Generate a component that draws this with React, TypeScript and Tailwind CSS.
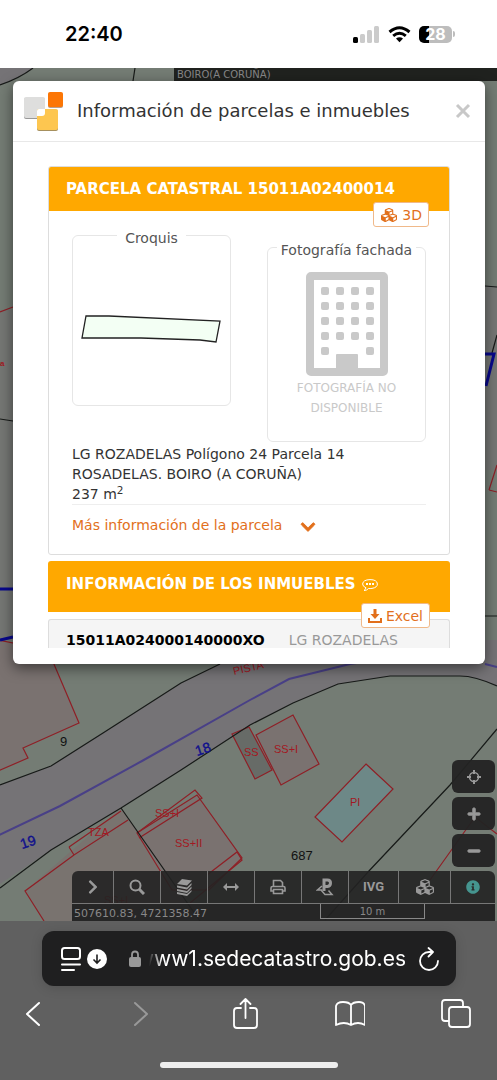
import type { ReactNode } from 'react'
import { FaChevronDown, FaChevronRight, FaCubes, FaInfoCircle, FaMinus, FaPlus } from 'react-icons/fa'

const buildings = [
  '-2,640 48,650 79,723 23,748 28,758 -2,771',
  '137,833 197,795 242,858 209,890 172,890',
  '256,735 293,715 319,764 281,785',
]

const rows = [290, 305, 320, 335, 350]
const cols = [324, 339, 354, 369]

function MapCanvas() {
  return (
    <svg className="absolute inset-0 h-full w-full" viewBox="0 0 497 853" preserveAspectRatio="xMidYMin slice" aria-hidden="true">
      <g transform="translate(0 -68)" fill="none" strokeWidth="1.2">
        <rect y="68" width="497" height="853" fill="#747c74" />
        <path d="M0 68H33Q20 78 0 85Z" fill="#757376" />
        <path d="M0 310H13V640H0ZM485 286H497V470H485Z" fill="#757774" />
        {/* road */}
        <path d="M0 785 51 766 103 733 181 683 220 664 300 640 497 640V686Q475 676 460 676L390 676 338 684 293 703 250 725 181 770 121 808 51 850 0 884Z" fill="#757376" />
        {/* ground south of the road */}
        <path d="M25 891 121 808 200 921H44Z" fill="#79736f" />
        {buildings.map(points => <polygon key={points} points={points} fill="#7a7270" stroke="#8f1f26" />)}
        <polygon points="232,734 249,727 272,770 255,779" fill="#676b67" stroke="#8f1f26" />
        <polygon points="366,764 393,789 342,842 315,817" fill="#6d8887" stroke="#8f1f26" />
        <path d="M137 833 195 790 202 798 139 838M69 847 121 811M69 847 74 855 128 820M74 855 25 891 44 921M207 875 237 852 242 860 190 903" stroke="#8f1f26" />
        <path d="M430 880 475 817 497 834M0 312 13 307M489 490 497 465M489 490 497 492" stroke="#8f1f26" />
        {/* parcel limits */}
        <path d="M0 85Q20 78 33 68M135 68 133 81M0 785 51 766 103 733 181 683 220 664M497 686Q475 676 460 676L390 676 338 684 293 703 250 725 181 770 121 808 51 850 0 888M121 808 200 921M497 729 450 785 368 872 325 920M0 419 13 421M485 286 497 287M485 616H497M492 353 497 335" stroke="#171a18" />
        <path d="M-1 835 60 806 142 761 250 700 289 679 350 664 410 655M485 664 497 667" stroke="#494087" strokeWidth="2" />
        <path d="M485 354H494L486 386M0 589H13M0 640 13 637" stroke="#08088c" strokeWidth="3" />
        <g fill="#a31822" fontFamily="Liberation Sans" fontSize="11">
          <text x="0" y="366" fontSize="8" fontWeight="700">a</text>
          <text x="234" y="675" transform="rotate(-13 234 675)">PISTA</text>
          <text x="155" y="817">SS+I</text>
          <text x="274" y="753">SS+I</text>
          <text x="244" y="756">SS</text>
          <text x="175" y="847">SS+II</text>
          <text x="88" y="836">TZA</text>
          <text x="350" y="806">PI</text>
          <text x="104" y="904">SS+I</text>
        </g>
        <g fill="#111" fontFamily="Liberation Sans" fontSize="13">
          <text x="60" y="746">9</text>
          <text x="291" y="860">687</text>
        </g>
        <g fill="#10108c" stroke="#10108c" strokeWidth="0.4" fontFamily="Liberation Sans" fontSize="14">
          <text x="197" y="756" transform="rotate(-18 197 756)">18</text>
          <text x="22" y="849" transform="rotate(-18 22 849)">19</text>
        </g>
      </g>
    </svg>
  )
}

function StatusBar() {
  return (
    <header className="flex h-[68px] items-center justify-between bg-white pl-[65px] pr-[42px] font-[Inter]">
      <span className="text-xl font-semibold text-black">22:40</span>
      <div className="flex items-center gap-2">
        <svg className="h-[17px] w-[27px]" viewBox="0 0 27 17" fill="#cbcbcb">
          <rect x="0" y="11" width="5" height="6" rx="1.5" fill="#000" />
          <rect x="7" y="8" width="5" height="9" rx="1.5" />
          <rect x="14" y="4" width="5" height="13" rx="1.5" />
          <rect x="21" y="0" width="5" height="17" rx="1.5" />
        </svg>
        <svg className="h-[17px] w-[23px]" viewBox="0 0 23 17" fill="none" stroke="#000" strokeWidth="3">
          <path d="M1.5 6Q11.500 -2.500 21.500 6M5.200 9.800Q11.500 4.600 17.800 9.800" />
          <path d="M8 12.500Q11.500 9.800 15 12.500L11.500 16.200Z" fill="#000" stroke="none" />
        </svg>
        <div className="flex items-center">
          <span className="flex h-[17px] w-[33px] items-center justify-center rounded-[5px] bg-linear-to-r from-black from-30% to-[#bdbdbd] to-30% text-base font-bold text-white">28</span>
          <span className="ml-px h-[6px] w-[2px] rounded-r-full bg-[#bdbdbd]" />
        </div>
      </div>
    </header>
  )
}

function CatastroLogo() {
  return (
    <svg className="h-10 w-10 shrink-0" viewBox="0 0 40 40" aria-hidden="true">
      <rect x="1" y="7" width="21" height="21" rx="2" fill="#999" />
      <rect x="1" y="6" width="21" height="21" rx="2" fill="#dededd" />
      <rect x="25" y="2" width="15" height="15" rx="2" fill="#b9a08c" />
      <rect x="25" y="1" width="15" height="15" rx="2" fill="#fc7605" />
      <rect x="14" y="19" width="21" height="21" rx="2" fill="#a6905e" />
      <rect x="14" y="18" width="21" height="21" rx="2" fill="#fdc650" />
      <path d="M14 20Q14 18 16 18H22V22Q22 25 19 25H14Z" fill="#fff" />
    </svg>
  )
}

function NoPhoto() {
  return (
    <svg className="h-[104px] w-[82px]" viewBox="305 272 82 104" fill="#c9c9c9" aria-hidden="true">
      <rect x="309" y="276" width="74" height="96" rx="1" fill="none" stroke="#c9c9c9" strokeWidth="8" strokeLinejoin="round" />
      {rows.map(y => cols.filter((_, i) => y < 350 || i === 0 || i === 3).map(x => (
        <rect key={`${x}-${y}`} x={x - 4} y={y - 3} width="8" height="8" rx="2" />
      )))}
      <rect x="335" y="354" width="22" height="18" rx="1" />
    </svg>
  )
}

function OutlineButton({ children }: { children: ReactNode }) {
  return (
    <button className="absolute -bottom-4 right-5 flex h-[25px] items-center gap-1 rounded-[3px] border border-[#f0b98a] bg-white px-[6px] text-sm text-[#e2701c]">
      {children}
    </button>
  )
}

function ParcelModal() {
  return (
    <section role="dialog" aria-labelledby="title" className="relative ml-[13px] mr-3 rounded-md bg-white pb-4 shadow-[0_4px_14px_rgba(0,0,0,0.5)]">
      <div className="flex h-[61px] items-center border-b border-[#e8e8e8] pl-[10px] pr-[14px]">
        <CatastroLogo />
        <h1 id="title" className="ml-[14px] flex-1 whitespace-nowrap text-lg text-[#333]">Información de parcelas e inmuebles</h1>
        <button aria-label="Cerrar" className="text-[#c8c8c8]">
          <svg className="h-4 w-4" viewBox="0 0 16 16" stroke="currentColor" strokeWidth="3"><path d="M2 2 14 14M14 2 2 14" /></svg>
        </button>
      </div>

      <div className="px-[35px] pt-6">
        <article className="rounded-[3px] border border-[#ddd]">
          <div className="relative flex h-11 items-center rounded-t-[2px] bg-[#ffa800] pl-[17px]">
            <h2 className="whitespace-nowrap text-[15px] font-bold text-white">PARCELA CATASTRAL 15011A02400014</h2>
            <OutlineButton><FaCubes className="h-4 w-[18px]" /> 3D</OutlineButton>
          </div>

          <div className="px-[23px] pb-[19px] pt-[11px]">
            <div className="grid grid-cols-2 items-start gap-9">
              <fieldset className="min-w-0 rounded-md border border-[#e6e6e6]">
                <legend className="mx-auto px-2 pt-[6px] text-sm leading-5 text-[#555]">Croquis</legend>
                <svg className="w-full" viewBox="73 248 157 157">
                  <path d="M86 316 109 316 220 321 216 342 200 340 141 338 82 338Z" fill="#f3fff4" stroke="#222" strokeWidth="1.300" />
                </svg>
              </fieldset>
              <fieldset className="mt-3 min-w-0 rounded-md border border-[#e6e6e6] pb-[23px]">
                <legend className="mx-auto whitespace-nowrap px-1 pt-[6px] text-sm leading-5 text-[#555]">Fotografía fachada</legend>
                <div className="flex flex-col items-center pt-3">
                  <NoPhoto />
                  <p className="mt-[2px] text-center text-xs leading-5 text-[#c9c9c9]">FOTOGRAFÍA NO<br />DISPONIBLE</p>
                </div>
              </fieldset>
            </div>

            <p className="mt-[2px] whitespace-nowrap text-sm leading-5 text-[#333]">
              LG ROZADELAS Polígono 24 Parcela 14<br />
              ROSADELAS. BOIRO (A CORUÑA)<br />
              237 m<sup>2</sup>
            </p>
            <a href="#mas" className="flex items-center gap-[18px] whitespace-nowrap border-t border-[#eee] pt-[10px] text-sm leading-5 text-[#e2701c]">
              Más información de la parcela
              <FaChevronDown className="mt-1 h-4 w-4" stroke="currentColor" strokeWidth="30" />
            </a>
          </div>
        </article>

        <div className="relative mt-[6px] flex h-[51px] items-center rounded-t-[3px] bg-[#ffa800] pb-1 pl-[18px]">
          <h2 className="whitespace-nowrap text-[15px] font-bold text-white">INFORMACIÓN DE LOS INMUEBLES</h2>
          <svg className="ml-[6px] h-3 w-4 text-white" viewBox="0 0 16 12" fill="none" stroke="currentColor" aria-hidden="true">
            <path d="M4 8.800Q3.500 10.500 2 11.500 5 11.500 6.500 9.500 8 9.700 10 9.400 15.400 8.500 15.400 5 15 .6 8 .6 1 .8 .6 5 .7 7.500 4 8.800Z" />
            <path d="M4 5H6M7 5H9M10 5H12" strokeWidth="2" />
          </svg>
          <OutlineButton>
            <svg className="h-[14px] w-[14px]" viewBox="0 0 14 14" fill="currentColor">
              <path d="M5.500 0H8.500V5H11.500L7 10 2.500 5H5.500ZM0 9H2V12H12V9H14V14H0Z" />
            </svg>
            Excel
          </OutlineButton>
        </div>

        <div className="mt-[7px] flex gap-6 rounded-t-[3px] border border-b-0 border-[#ddd] bg-[#f5f5f5] pl-[17px] pt-3 text-sm leading-4">
          <b className="text-black">15011A024000140000XO</b>
          <span className="whitespace-nowrap text-[#999]">LG ROZADELAS</span>
        </div>
      </div>
    </section>
  )
}

const tools = [
  { label: 'Abrir', icon: <FaChevronRight className="h-4 w-4" /> },
  { label: 'Buscar', icon: <svg className="h-4 w-4" viewBox="0 0 16 16" fill="none" stroke="currentColor" strokeWidth="2"><circle cx="6.500" cy="6.500" r="5" /><path d="M10 10 15 15" strokeWidth="3" /></svg> },
  { label: 'Capas', icon: <svg className="h-[18px] w-[18px]" viewBox="0 0 18 18" fill="currentColor"><path d="M7 1 17 2.500 12 7.500 2 6ZM2 7.500 12 9.500 16.500 5V7L12 11.500 2 9.500ZM2 11 12 13 16.500 8.500V10.500L12 15 2 13ZM2 14 12 16 16.500 12V13.500L12 18 2 16Z" /></svg> },
  { label: 'Medir', icon: <svg className="h-3 w-4" viewBox="0 0 16 12" fill="currentColor"><path d="M0 6 4 2V5H12V2L16 6 12 10V7H4V10Z" /></svg> },
  { label: 'Imprimir', icon: <svg className="h-4 w-4" viewBox="0 0 16 16" fill="none" stroke="currentColor" strokeWidth="1.600"><path d="M3.500 7V1.500H10.500L12.500 3.500V7M3 12H1V9Q1 7.500 2.500 7.500H13.500Q15 7.500 15 9V12H13M3.500 10.500H12.500V14.500H3.500Z" /></svg> },
  { label: 'Street View', icon: <svg className="h-[18px] w-[18px]" viewBox="0 0 18 18" fill="none" stroke="currentColor"><path d="M8 13V2H11.500Q14.500 2 14.500 5T11.500 8.500H8" strokeWidth="3" /><path d="M6 8 1.500 12H6.500M5 12 9 16.500H16L12.500 12.500" strokeWidth="1.500" /></svg> },
  { label: 'IVG', icon: <span className="font-[Roboto] text-[13px] font-bold">IVG</span> },
  { label: '3D', icon: <FaCubes className="h-[18px] w-5" /> },
  { label: 'Información', icon: <FaInfoCircle className="h-[14px] w-[14px] text-[#45958f]" /> },
]

function MapControls() {
  return (
    <div className="relative pr-[2px] pt-24 text-[#999]">
      <div className="ml-auto grid w-[43px] gap-1">
        <button aria-label="Mi posición" className="flex h-[33px] items-center justify-center rounded-md bg-[#232323]/95">
          <svg className="h-[14px] w-[14px]" viewBox="0 0 14 14" fill="none" stroke="currentColor" strokeWidth="1.500"><circle cx="7" cy="7" r="4.500" /><path d="M7 0V4M7 10V14M0 7H4M10 7H14" strokeWidth="2" /></svg>
        </button>
        <button aria-label="Acercar" className="flex h-[33px] items-center justify-center rounded-md bg-[#232323]/95"><FaPlus className="h-[14px] w-[14px]" stroke="currentColor" strokeWidth="30" /></button>
        <button aria-label="Alejar" className="flex h-[33px] items-center justify-center rounded-md bg-[#232323]/95"><FaMinus className="h-[14px] w-[14px]" stroke="currentColor" strokeWidth="30" /></button>
      </div>
      <div className="ml-[72px] mt-1 border-b border-[#777]">
        <div className="grid grid-cols-[42fr_47fr_47fr_47fr_47fr_47fr_50fr_52fr_44fr] divide-x divide-[#777] overflow-hidden rounded-t-md bg-[#222]/90">
          {tools.map(tool => (
            <button key={tool.label} aria-label={tool.label} className="flex h-8 items-center justify-center">{tool.icon}</button>
          ))}
        </div>
      </div>
      <div className="ml-[72px] flex h-[17px] items-start bg-[#222]/95 pl-[2px] pr-[70px] text-[11px] leading-4 text-[#888]">
        <span className="flex-1 whitespace-nowrap pt-[2px]">507610.83, 4721358.47</span>
        <span className="h-[15px] w-[105px] border border-t-0 border-[#888] text-center text-[10px]">10 m</span>
      </div>
    </div>
  )
}

function BrowserBar() {
  return (
    <footer className="bg-[#606060] pb-[9px] pt-[10px] font-[Inter] text-white">
      <div className="ml-[42px] mr-[41px] flex h-[55px] items-center rounded-xl bg-[#1f1f20] pl-[19px] pr-4 shadow-[0_2px_12px_rgba(0,0,0,0.15)]">
        <svg className="h-6 w-5" viewBox="0 0 20 24" fill="none" stroke="currentColor" strokeWidth="2" strokeLinecap="round"><rect x="1" y="1" width="18" height="11" rx="2.500" /><path d="M1 17.500H19M1 23H13" /></svg>
        <svg className="ml-[6px] h-5 w-5" viewBox="0 0 20 20"><circle cx="10" cy="10" r="10" fill="#fff" /><path d="M10 5.500V14M6.500 10.500 10 14 13.500 10.500" fill="none" stroke="#1f1f20" strokeWidth="1.600" /></svg>
        <svg className="ml-[22px] h-[17px] w-3" viewBox="0 0 12 17" fill="#999"><rect y="7" width="12" height="10" rx="2" /><path d="M3 8V4.500Q3 1.500 6 1.500T9 4.500V8" fill="none" stroke="#999" strokeWidth="1.800" /></svg>
        <span className="ml-2 flex min-w-0 flex-1 justify-end overflow-hidden whitespace-nowrap text-[21px] leading-8 mask-l-from-95%">www1.sedecatastro.gob.es</span>
        <button aria-label="Recargar" className="ml-3">
          <svg className="h-6 w-[22px]" viewBox="0 0 22 24" fill="none" stroke="currentColor" strokeWidth="1.800" strokeLinecap="round" strokeLinejoin="round"><path d="M11 5A9 9 0 1 0 20 14M11 5H14M10.500 1 15 5 10.500 9.500" /></svg>
        </button>
      </div>
      <nav className="flex items-center justify-between pb-8 pl-[18px] pr-[26px] pt-3">
        <button aria-label="Atrás"><svg className="h-8 w-[30px]" viewBox="0 0 30 32" fill="none" stroke="currentColor" strokeWidth="2" strokeLinecap="round" strokeLinejoin="round"><path d="M21 5 9 16 21 27" /></svg></button>
        <button aria-label="Adelante" className="text-[#999]"><svg className="h-8 w-[30px]" viewBox="0 0 30 32" fill="none" stroke="currentColor" strokeWidth="2" strokeLinecap="round" strokeLinejoin="round"><path d="M11 5 23 16 11 27" /></svg></button>
        <button aria-label="Compartir"><svg className="h-8 w-[30px]" viewBox="0 0 30 32" fill="none" stroke="currentColor" strokeWidth="1.800" strokeLinecap="round" strokeLinejoin="round"><path d="M11 10H7Q4 10 4 13V27Q4 30 7 30H24Q27 30 27 27V13Q27 10 24 10H20M15.500 20V1M10.500 6 15.500 1 20.500 6" /></svg></button>
        <button aria-label="Marcadores"><svg className="h-8 w-[30px]" viewBox="0 0 30 32" fill="none" stroke="currentColor" strokeWidth="1.800" strokeLinejoin="round"><path d="M16 27Q9 23 1 27V8Q2 4 8 4 14 4 16 7 18 4 24 4 29 4 30 8V27Q23 23 16 27V7" /></svg></button>
        <button aria-label="Pestañas"><svg className="h-8 w-[30px]" viewBox="0 0 30 32" fill="none" stroke="currentColor" strokeWidth="1.800"><path d="M8 23H4Q1 23 1 20V5Q1 2 4 2H19Q22 2 22 5V8" /><rect x="8" y="9" width="21" height="20" rx="3" /></svg></button>
      </nav>
      <div className="mx-auto h-[6px] w-[178px] rounded-full bg-[#eee]" />
    </footer>
  )
}

export default function App() {
  return (
    <div className="min-h-screen bg-[#606060] font-['DejaVu_Sans',sans-serif]">
      <StatusBar />
      <main className="relative overflow-hidden">
        <MapCanvas />
        <div className="relative ml-[174px] h-[13px] overflow-hidden bg-[#20221f] pl-[3px] text-[10px] leading-[13px] text-[#888]">BOIRO(A CORUÑA)</div>
        <ParcelModal />
        <MapControls />
      </main>
      <BrowserBar />
    </div>
  )
}
